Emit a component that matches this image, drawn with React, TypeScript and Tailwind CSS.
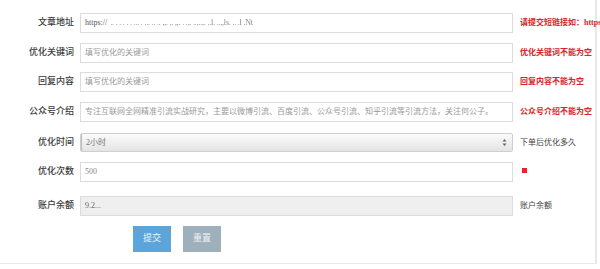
const font = { fontFamily: '"Liberation Serif", "Noto Sans CJK SC", serif' }

function Row({
  label,
  mt,
  children,
  tip,
}: {
  label: string
  mt: string
  children: React.ReactNode
  tip?: React.ReactNode
}) {
  return (
    <div className={`flex items-center ${mt}`}>
      <div className="w-[75px] shrink-0 pr-[1px] text-right text-[9px] font-medium text-[#3a3a3a]">{label}</div>
      <div className="ml-[5px] w-[433px] shrink-0">{children}</div>
      <div className="ml-[7px] text-[8px] leading-none">{tip}</div>
    </div>
  )
}

function Field({ value, placeholder, disabled }: { value?: React.ReactNode; placeholder?: string; disabled?: boolean }) {
  return (
    <div
      className={`h-[20px] border border-[#dcdcdc] px-[4px] flex items-center text-[8px] whitespace-nowrap overflow-hidden ${
        disabled ? "bg-[#efefef]" : "bg-white"
      } ${value ? "text-[#555]" : "text-[#999]"}`}
    >
      {value ?? placeholder}
    </div>
  )
}

export default function App() {
  return (
    <div className="w-[600px] h-[269px] bg-white overflow-hidden" style={font}>
      <div className="w-[597px] h-[264px] border-r-[2px] border-b border-[#e8e8e8] pt-[13px]">
        <Row label="文章地址" mt="mt-0" tip={<span className="font-semibold text-[#d6262a] whitespace-nowrap">请提交短链接如：https://</span>}>
          <Field
            value={
              <span className="flex items-center">
                <span>https://</span>
                <span className="ml-[3px] blur-[0.6px] text-[#888] tracking-tight">.. . . . . . ... . ... .. .. ,,. ,. ,,. . .,. ..,..,. ..l. ..,,ls. .. .l .Nt</span>
              </span>
            }
          />
        </Row>
        <Row label="优化关键词" mt="mt-[10px]" tip={<span className="font-semibold text-[#d6262a]">优化关键词不能为空</span>}>
          <Field placeholder="填写优化的关键词" />
        </Row>
        <Row label="回复内容" mt="mt-[9px]" tip={<span className="font-semibold text-[#d6262a]">回复内容不能为空</span>}>
          <Field placeholder="填写优化的关键词" />
        </Row>
        <Row label="公众号介绍" mt="mt-[10px]" tip={<span className="font-semibold text-[#d6262a]">公众号介绍不能为空</span>}>
          <Field placeholder="专注互联网全网精准引流实战研究，主要以微博引流、百度引流、公众号引流、知乎引流等引流方法，关注何公子。" />
        </Row>
        <Row label="优化时间" mt="mt-[11px]" tip={<span className="text-[#444]">下单后优化多久</span>}>
          <div className="h-[19px] rounded-[2px] border border-[#cfcfcf] bg-gradient-to-b from-[#fbfbfb] to-[#e4e4e4] shadow-[inset_1px_0_0_#bbb] px-[5px] flex items-center justify-between text-[8px] text-[#777]">
            <span>2小时</span>
            <svg width="5" height="9" viewBox="0 0 5 9">
              <path d="M2.5 1 L4.5 3.5 L0.5 3.5 Z" fill="#666" />
              <path d="M2.5 8 L4.5 5.5 L0.5 5.5 Z" fill="#666" />
            </svg>
          </div>
        </Row>
        <Row label="优化次数" mt="mt-[10px]" tip={<span className="block w-[5px] h-[5px] ml-[2px] -mt-[3px] bg-[#e8242b]" />}>
          <Field value={<span className="text-[#888]">500</span>} />
        </Row>
        <Row label="账户余额" mt="mt-[14px]" tip={<span className="text-[#444]">账户余额</span>}>
          <Field disabled value={<span className="blur-[0.6px] text-[#666]">9.2...</span>} />
        </Row>
        <div className="mt-[10px] flex pl-[133px] gap-[12px]">
          <button className="w-[38px] h-[26px] bg-[#5ba5da] text-[#eef6fc] text-[9px]">提交</button>
          <button className="w-[38px] h-[26px] bg-[#9eb0bb] text-[#eef2f4] text-[9px]">重置</button>
        </div>
      </div>
    </div>
  )
}
